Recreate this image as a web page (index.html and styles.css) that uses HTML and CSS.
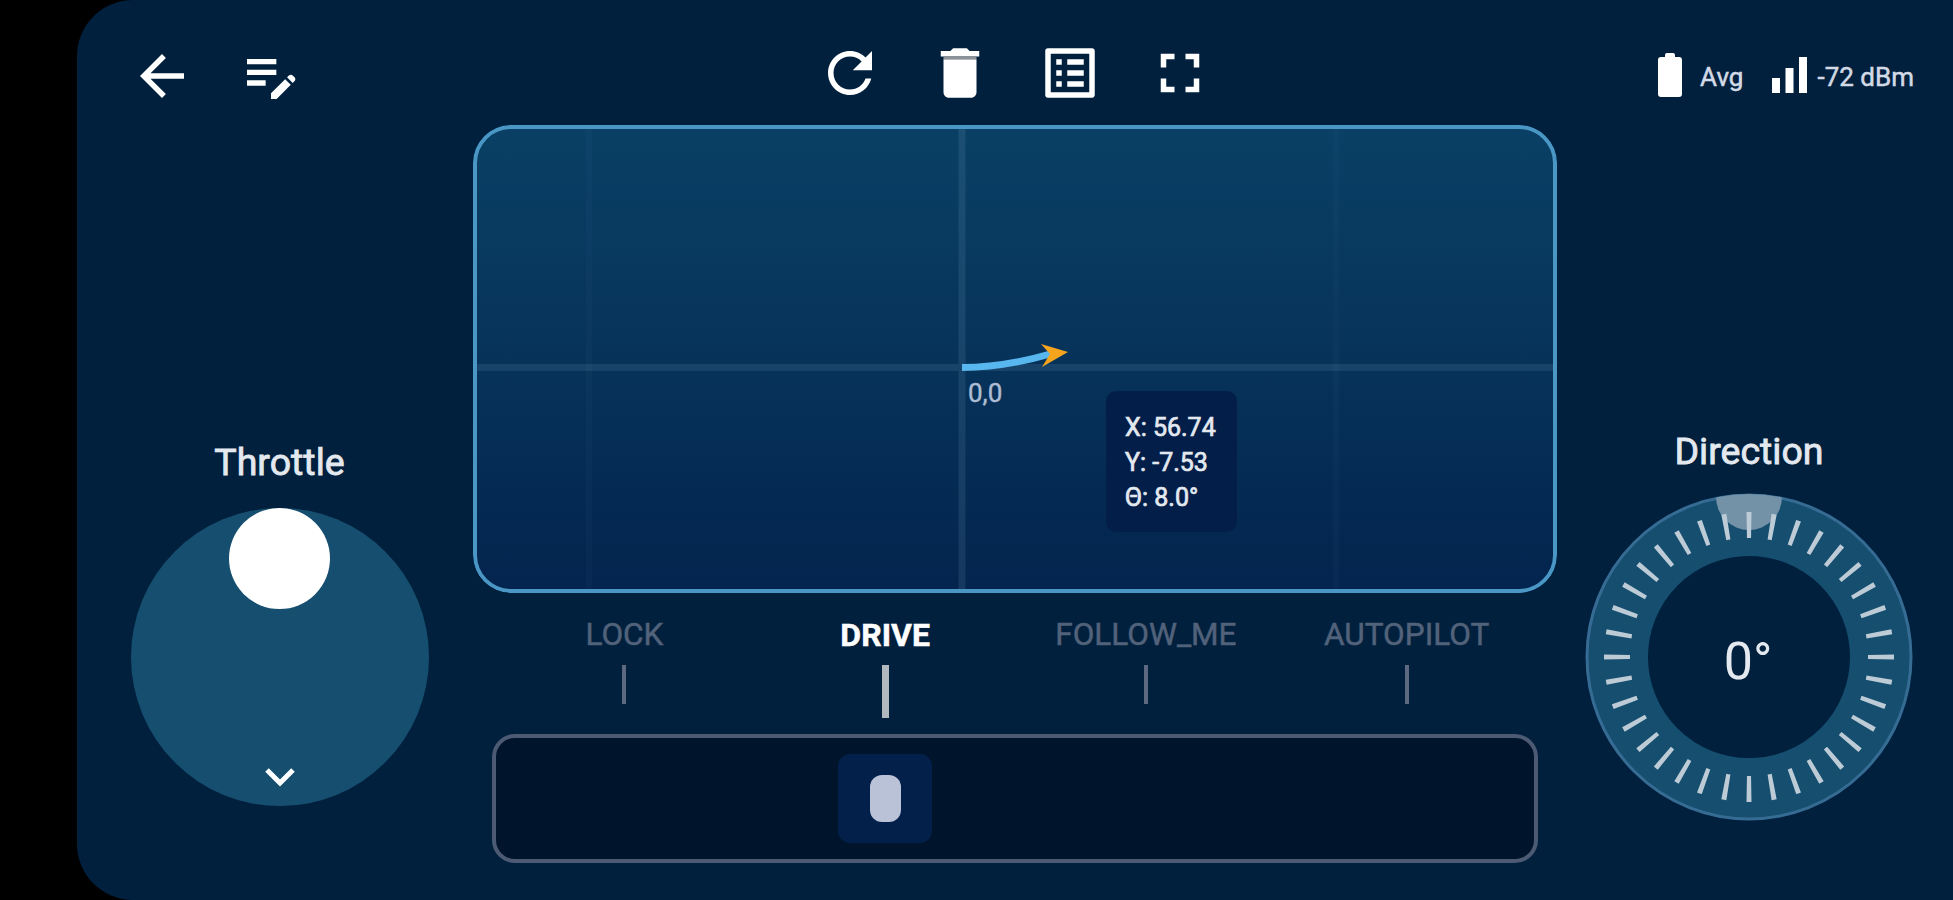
FILE: index.html
```html
<!DOCTYPE html>
<html lang="en">
<head>
  <meta charset="UTF-8">
  <meta name="viewport" content="width=device-width, initial-scale=1.0">
  <title>Robot Control</title>
  <link rel="stylesheet" href="styles.css">
</head>
<body>
  <div class="app">
    <!-- Top bar -->
    <nav class="nav-actions">
      <svg class="icon" viewBox="0 0 24 24"><path d="M20 11H7.83l5.59-5.59L12 4l-8 8 8 8 1.41-1.41L7.83 13H20v-2z"/></svg>
      <svg class="icon notes" viewBox="0 0 24 24"><path d="M3 10h11v2H3zm0-2h11V6H3zm0 8h7v-2H3zm15.01-3.13.71-.71c.39-.39 1.02-.39 1.41 0l.71.71c.39.39.39 1.02 0 1.41l-.71.71zm-.71.71-5.3 5.3V21h2.12l5.3-5.3z"/></svg>
    </nav>

    <div class="map-actions">
      <svg class="icon" viewBox="0 0 24 24"><path d="M17.65 6.35C16.2 4.9 14.21 4 12 4c-4.42 0-7.99 3.58-7.99 8s3.57 8 7.99 8c3.73 0 6.84-2.55 7.73-6h-2.08c-.82 2.33-3.04 4-5.65 4-3.31 0-6-2.69-6-6s2.69-6 6-6c1.66 0 3.14.69 4.22 1.78L13 11h7V4l-2.35 2.35z"/></svg>
      <svg class="icon" viewBox="0 0 24 24"><path d="M6 19c0 1.100.9 2 2 2h8c1.100 0 2-.9 2-2V7H6v12zM19 4h-3.500l-1-1h-5l-1 1H5v2h14V4z"/><path class="lid-gap" d="M6 6h12v1H6z"/></svg>
      <svg class="icon" viewBox="0 0 24 24"><path d="M19 5v14H5V5h14m1.100-2H3.900c-.5 0-.9.4-.9.9v16.200c0 .4.4.9.9.9h16.200c.4 0 .9-.5.9-.9V3.900c0-.5-.5-.9-.9-.9zM11 7h6v2h-6V7zm0 4h6v2h-6v-2zm0 4h6v2h-6v-2zM7 7h2v2H7zm0 4h2v2H7zm0 4h2v2H7z"/></svg>
      <svg class="icon" viewBox="0 0 24 24"><path d="M7 14H5v5h5v-2H7v-3zm-2-4h2V7h3V5H5v5zm12 7h-3v2h5v-5h-2v3zM14 5v2h3v3h2V5h-5z"/></svg>
    </div>

    <div class="status">
      <svg class="battery" viewBox="0 0 24 44"><path d="M21 4h-4V2q0-2-2-2H9Q7 0 7 2v2H3Q0 4 0 7v34q0 3 3 3h18q3 0 3-3V7q0-3-3-3z"/></svg>
      <span class="status-text">Avg</span>
      <svg class="signal" viewBox="0 0 35 36"><path d="M0 21h8v15H0zM13.500 11h8v25h-8zM27 0h8v36h-8z"/></svg>
      <span class="status-text">-72 dBm</span>
    </div>

    <!-- Throttle -->
    <section class="control throttle">
      <h2>Throttle</h2>
      <div class="pad">
        <div class="knob"></div>
        <svg class="chevron" viewBox="0 0 30 19"><path d="M2 2l13 13L28 2"/></svg>
      </div>
    </section>

    <!-- Map and drive modes -->
    <main class="center">
      <div class="map">
        <svg class="plot" viewBox="0 0 1084 468">
          <path class="grid-faint" d="M116 0v468M863 0v468"/>
          <path class="axis" d="M489 0v468M0 242.500h1084"/>
          <path class="track" d="M489 242.500q42 0 90-14"/>
          <path class="arrow" d="M595 227l-27-8 9 10-8 13z"/>
          <text class="origin" x="495" y="277">0,0</text>
        </svg>
        <div class="pose">
          <div>X: 56.74</div>
          <div>Y: -7.53</div>
          <div>Θ: 8.0°</div>
        </div>
      </div>

      <div class="modes">
        <div class="mode">LOCK</div>
        <div class="mode active">DRIVE</div>
        <div class="mode">FOLLOW_ME</div>
        <div class="mode">AUTOPILOT</div>
      </div>

      <div class="slider">
        <div class="thumb"></div>
      </div>
    </main>

    <!-- Direction -->
    <section class="control direction">
      <h2>Direction</h2>
      <svg class="wheel" viewBox="-164 -164 328 328">
        <clipPath id="rim"><circle r="163"/></clipPath>
        <circle class="ring" r="132"/>
        <circle class="rim" r="162"/>
        <circle class="marker" cy="-160" r="33" clip-path="url(#rim)"/>
        <circle class="ticks" r="132" pathLength="360"/>
        <text x="-1" y="22">0°</text>
      </svg>
    </section>
  </div>
</body>
</html>
```

FILE: styles.css
```css
:root {
  --bg: #00203d;
  --pad: #164e6f;
  --muted: #52627a;
}

* {
  box-sizing: border-box;
  margin: 0;
  padding: 0;
}

body {
  background: #000;
  color: #e4e9f0;
  font-family: Roboto, sans-serif;
  overflow: hidden;
}

.app {
  display: grid;
  grid-template-columns: 396px 1084px 396px;
  grid-template-rows: 125px 1fr;
  height: 900px;
  margin-left: 77px;
  background: var(--bg);
  border-radius: 56px 0 0 56px;
}

/* Top bar */
.icon {
  width: 66px;
  height: 66px;
  fill: #fff;
}

.icon.notes {
  width: 64px;
  height: 64px;
}

.lid-gap {
  fill: #8d9197;
}

.nav-actions {
  display: flex;
  gap: 44px;
  padding: 43px 0 0 52px;
}

.map-actions {
  display: flex;
  justify-content: center;
  gap: 44px;
  padding-top: 40px;
}

.status {
  display: flex;
  justify-content: flex-end;
  align-items: center;
  height: 44px;
  margin-top: 53px;
  padding-right: 39px;
}

.battery {
  width: 24px;
  height: 44px;
  margin-right: 18px;
  fill: #fff;
}

.signal {
  width: 35px;
  height: 36px;
  margin: 0 10px 0 29px;
  fill: #fff;
}

.status-text {
  font-size: 26px;
  line-height: 30px;
  padding-top: 3px;
  color: #d3dae5;
  -webkit-text-stroke: 0.5px;
}

/* Side controls */
.control {
  display: flex;
  flex-direction: column;
}

.control h2 {
  font-size: 37.5px;
  line-height: 44px;
  font-weight: 400;
  -webkit-text-stroke: 0.8px;
}

.throttle {
  align-items: center;
  padding: 315px 0 0 9px;
}

.pad {
  display: flex;
  flex-direction: column;
  justify-content: space-between;
  align-items: center;
  width: 298px;
  height: 298px;
  margin-top: 24px;
  padding-bottom: 19px;
  background: var(--pad);
  border-radius: 50%;
}

.knob {
  width: 101px;
  height: 101px;
  background: #fff;
  border-radius: 50%;
}

.chevron {
  width: 30px;
  height: 19px;
  fill: none;
  stroke: #fff;
  stroke-width: 5;
}

.direction {
  align-items: center;
  padding: 304px 12px 0 0;
}

.wheel {
  width: 328px;
  height: 328px;
  margin-top: 20px;
}

.ring {
  fill: none;
  stroke: var(--pad);
  stroke-width: 62;
}

.rim {
  fill: none;
  stroke: #366b93;
  stroke-width: 3;
}

.marker {
  fill: #7392a8;
}

.ticks {
  fill: none;
  stroke: #bccbd6;
  stroke-width: 26;
  stroke-dasharray: 2 8;
  stroke-dashoffset: 1;
}

.wheel text {
  font-size: 52px;
  fill: #e4e9f0;
  text-anchor: middle;
}

/* Map */
.map {
  position: relative;
  height: 468px;
  background: linear-gradient(#0a4065, #07345b 45%, #03244e);
  border-radius: 38px;
  overflow: hidden;
}

.map::after {
  content: "";
  position: absolute;
  inset: 0;
  border: 4px solid #4a97c6;
  border-radius: 38px;
}

.plot {
  display: block;
  width: 1084px;
  height: 468px;
}

.axis {
  stroke: rgba(120, 160, 195, 0.16);
  stroke-width: 7;
}

.grid-faint {
  stroke: rgba(120, 160, 195, 0.04);
  stroke-width: 6;
}

.track {
  fill: none;
  stroke: #58b7ee;
  stroke-width: 7;
}

.arrow {
  fill: #f5a51d;
}

.origin {
  font-size: 26px;
  fill: #aebdd3;
  stroke: #aebdd3;
  stroke-width: 0.4px;
}

.pose {
  position: absolute;
  left: 633px;
  top: 266px;
  width: 131px;
  height: 141px;
  padding: 19px 0 0 19px;
  background: #031f49;
  border-radius: 10px;
  font-size: 25px;
  line-height: 35px;
  -webkit-text-stroke: 0.7px;
  white-space: nowrap;
}

/* Drive modes */
.modes {
  display: grid;
  grid-template-columns: repeat(4, 1fr);
  height: 141px;
  padding: 23px 20px 0 21px;
}

.mode {
  display: flex;
  flex-direction: column;
  align-items: center;
  color: var(--muted);
  font-size: 31.5px;
  line-height: 38px;
  -webkit-text-stroke: 0.5px;
}

.mode::after {
  content: "";
  width: 4px;
  height: 39px;
  margin-top: 11px;
  background: #5c6980;
}

.mode.active {
  color: #fff;
  font-weight: 700;
  font-size: 32px;
}

.mode.active::after {
  width: 7px;
  height: 53px;
  background: #b1b8be;
}

.slider {
  display: grid;
  grid-template-columns: repeat(4, 1fr);
  align-items: center;
  height: 129px;
  margin: 0 19px;
  background: #00142b;
  border: 4px solid #4d5a74;
  border-radius: 23px;
}

.thumb {
  grid-column: 2;
  display: flex;
  justify-content: center;
  align-items: center;
  justify-self: center;
  width: 94px;
  height: 89px;
  background: #02204a;
  border-radius: 12px;
}

.thumb::before {
  content: "";
  width: 31px;
  height: 47px;
  background: #b9c2d7;
  border-radius: 12px;
}
```
